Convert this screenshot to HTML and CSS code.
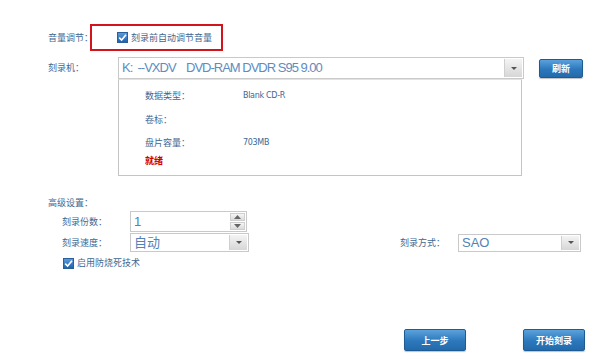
FILE: index.html
```html
<!DOCTYPE html>
<html lang="zh-CN">
<head>
    <meta charset="UTF-8">
    <title>刻录设置</title>
    <link rel="stylesheet" href="styles.css">
</head>
<body>
<div class="page">
    <div class="row volume-row">
        <div class="label">音量调节：</div>
        <div class="volume-box">
            <span class="check"><svg viewBox="0 0 11 11" width="11" height="11"><path d="M2.2 5.6 L4.6 8 L9 2.8" fill="none" stroke="#fff" stroke-width="1.6"/></svg></span>
            <span class="check-text">刻录前自动调节音量</span>
        </div>
    </div>

    <div class="row burner-row">
        <div class="label burner-label">刻录机：</div>
        <div class="select burner-select">
            <span class="select-text">K:&nbsp;&nbsp;--VXDV&nbsp;&nbsp;&nbsp;&nbsp;DVD-RAM DVDR S95 9.00</span>
            <span class="drop"><i></i></span>
        </div>
        <button class="btn small-btn">刷新</button>
    </div>

    <div class="info-box">
        <div class="info-row"><span class="info-label">数据类型：</span><span class="info-value">Blank CD-R</span></div>
        <div class="info-row"><span class="info-label">卷标：</span><span class="info-value"></span></div>
        <div class="info-row"><span class="info-label">盘片容量：</span><span class="info-value">703MB</span></div>
        <div class="status">就绪</div>
    </div>

    <div class="advanced">
        <div class="label">高级设置：</div>
        <div class="adv-row copies-row">
            <div class="label sub-label">刻录份数：</div>
            <div class="select spin">
                <span class="select-text">1</span>
                <span class="spin-btns">
                    <span class="spin-btn"><svg viewBox="0 0 7 4" width="7" height="4"><path d="M0 4 L3.5 0 L7 4 Z" fill="#666"/></svg></span>
                    <span class="spin-btn"><svg viewBox="0 0 7 4" width="7" height="4"><path d="M0 0 L3.5 4 L7 0 Z" fill="#666"/></svg></span>
                </span>
            </div>
        </div>
        <div class="adv-row speed-row">
            <div class="label sub-label">刻录速度：</div>
            <div class="select speed-select">
                <span class="select-text">自动</span>
                <span class="drop"><i></i></span>
            </div>
            <div class="label mode-label">刻录方式：</div>
            <div class="select mode-select">
                <span class="select-text">SAO</span>
                <span class="drop"><i></i></span>
            </div>
        </div>
        <div class="adv-row protect-row">
            <span class="check"><svg viewBox="0 0 11 11" width="11" height="11"><path d="M2.2 5.6 L4.6 8 L9 2.8" fill="none" stroke="#fff" stroke-width="1.6"/></svg></span>
            <span class="check-text">启用防烧死技术</span>
        </div>
    </div>

    <div class="footer">
        <button class="btn big-btn">上一步</button>
        <button class="btn big-btn">开始刻录</button>
    </div>
</div>
</body>
</html>
```

FILE: styles.css
```css
body {
    margin: 0;
    background: #fff;
    font-family: "Noto Sans CJK SC", "DejaVu Sans", sans-serif;
    font-size: 9px;
    color: #3d6791;
}

.page {
    width: 600px;
    height: 358px;
    padding-left: 48px;
    box-sizing: border-box;
    padding-top: 24px;
}

.row {
    display: flex;
    align-items: center;
}

.label {
    white-space: nowrap;
    line-height: 14px;
}

.volume-row .label {
    width: 42px;
}

.volume-box {
    height: 23px;
    width: 104px;
    border: 2px solid #d4141c;
    display: flex;
    align-items: center;
    padding-left: 25px;
    white-space: nowrap;
}

.check {
    display: inline-flex;
    flex: none;
    width: 11px;
    height: 11px;
    background: linear-gradient(#5a9bd6, #1f63ad);
    border: 1px solid #2a5f9a;
    box-sizing: border-box;
    margin-right: 3px;
}

.check svg {
    margin: -1px;
}

.check-text {
    color: #3d6791;
    line-height: 14px;
}

.burner-row {
    margin-top: 6px;
    height: 22px;
}

.burner-label {
    width: 70px;
}

.select {
    display: flex;
    align-items: center;
    border: 1px solid #c9c9c9;
    background: #fff;
    box-sizing: border-box;
}

.select-text {
    flex: 1;
    padding-left: 3px;
    font-family: "Liberation Sans", "Noto Sans CJK SC", sans-serif;
    font-size: 13px;
    color: #5282b6;
    white-space: nowrap;
    line-height: 18px;
}

.burner-select {
    width: 406px;
    height: 22px;
}

.burner-select .select-text {
    font-size: 13px;
    letter-spacing: -1px;
    color: #5e8cbf;
}

.drop {
    width: 17px;
    align-self: stretch;
    margin: 1px;
    background: linear-gradient(#f4f4f4, #d6d6d6);
    border-left: 1px solid #cfcfcf;
    display: flex;
    align-items: center;
    justify-content: center;
}

.drop i {
    display: block;
    width: 0;
    height: 0;
    border-left: 3px solid transparent;
    border-right: 3px solid transparent;
    border-top: 3px solid #555;
}

.btn {
    border: 1px solid #1d5c92;
    border-radius: 2px;
    background: linear-gradient(#5aa2dc, #2c78bc 55%, #236aab);
    color: #fff;
    font-family: "Noto Sans CJK SC", sans-serif;
    font-weight: bold;
    font-size: 9px;
    padding: 0;
    box-shadow: 0 1px 1px rgba(0, 0, 0, 0.25);
}

.small-btn {
    width: 44px;
    height: 19px;
    margin-left: 15px;
}

.info-box {
    margin-left: 70px;
    width: 404px;
    height: 97px;
    border: 1px solid #c4c4c4;
    border-top-color: #e2e2e2;
    box-sizing: border-box;
    padding: 4px 0 0 26px;
}

.info-row {
    display: flex;
    height: 23.5px;
    align-items: center;
}

.info-label {
    width: 98px;
}

.info-value {
    font-size: 8px;
    font-family: "DejaVu Sans", sans-serif;
    letter-spacing: -0.3px;
}

.status {
    color: #d00000;
    font-weight: bold;
    line-height: 12px;
}

.advanced {
    margin-top: 20px;
}

.adv-row {
    display: flex;
    align-items: center;
    padding-left: 14px;
}

.copies-row {
    margin-top: 1px;
}

.sub-label {
    width: 68px;
}

.spin {
    width: 117px;
    height: 21px;
}

.spin-btns {
    display: flex;
    flex-direction: column;
    align-self: stretch;
    width: 15px;
    margin: 1px;
    gap: 1px;
}

.spin-btn {
    flex: 1;
    background: linear-gradient(#f6f6f6, #dadada);
    border: 1px solid #cfcfcf;
    display: flex;
    align-items: center;
    justify-content: center;
}

.speed-row {
    margin-top: 1px;
}

.speed-select {
    width: 119px;
    height: 19px;
}

.mode-label {
    margin-left: 151px;
    width: 58px;
}

.mode-select {
    width: 123px;
    height: 18px;
}

.protect-row {
    margin-top: 4px;
    padding-left: 15px;
}

.footer {
    display: flex;
    margin-top: 59px;
    padding-left: 356px;
    gap: 57px;
}

.big-btn {
    width: 62px;
    height: 22px;
}
```
